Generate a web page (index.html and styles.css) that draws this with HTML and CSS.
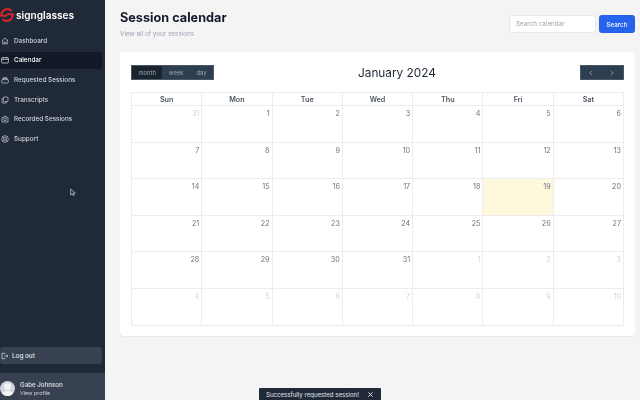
FILE: index.html
```html
<!DOCTYPE html>
<html lang="en">
<head>
    <meta charset="UTF-8">
    <title>Session calendar</title>
    <link rel="stylesheet" href="styles.css">
</head>
<body>
    <div class="app">
        <aside class="sidebar">
            <div class="brand">
                <svg class="brand-mark" viewBox="0 0 14 14" width="14" height="14" fill="none" stroke="#dc2626" stroke-width="2">
                    <path d="M11.6 3A6 6 0 0 0 1.8 4.6L1 8"/>
                    <path d="M2.4 11A6 6 0 0 0 12.2 9.4L13 6"/>
                    <path d="M0.5 7.8H7.2M6.8 6.2H13.5"/>
                </svg>
                <span>signglasses</span>
            </div>
            <nav class="nav">
                <a class="nav-item">
                    <svg class="icon" viewBox="0 0 24 24"><path d="M3 11 12 3l9 8M5 9.5V21h5v-6h4v6h5V9.5"/></svg>
                    Dashboard
                </a>
                <a class="nav-item active">
                    <svg class="icon" viewBox="0 0 24 24"><rect x="2" y="5" width="20" height="16" rx="2"/><path d="M2 10h20M7 3v4M17 3v4"/></svg>
                    Calendar
                </a>
                <a class="nav-item">
                    <svg class="icon" viewBox="0 0 24 24"><rect x="2" y="11" width="20" height="10" rx="2"/><path d="M5 11V8h14v3M7 8V5h10v3"/></svg>
                    Requested Sessions
                </a>
                <a class="nav-item">
                    <svg class="icon" viewBox="0 0 24 24"><rect x="7" y="3" width="14" height="14" rx="3"/><path d="M7 7H5a2 2 0 0 0-2 2v10a2 2 0 0 0 2 2h10a2 2 0 0 0 2-2v-2"/></svg>
                    Transcripts
                </a>
                <a class="nav-item">
                    <svg class="icon" viewBox="0 0 24 24"><path d="M3 7h4l2-3h6l2 3h4v14H3z"/><circle cx="12" cy="13" r="4"/></svg>
                    Recorded Sessions
                </a>
                <a class="nav-item">
                    <svg class="icon" viewBox="0 0 24 24"><circle cx="12" cy="12" r="10"/><circle cx="12" cy="12" r="4"/><path d="m5 5 4 4M19 5l-4 4M5 19l4-4M19 19l-4-4"/></svg>
                    Support
                </a>
            </nav>
            <a class="logout">
                <svg class="icon" viewBox="0 0 24 24"><path d="M13 4H3v16h10M10 12h11M17 8l4 4-4 4"/></svg>
                Log out
            </a>
            <div class="profile">
                <div class="avatar"><div class="avatar-head"></div><div class="avatar-body"></div></div>
                <div class="profile-text">
                    <div class="profile-name">Gabe Johnson</div>
                    <div class="profile-link">View profile</div>
                </div>
            </div>
        </aside>

        <main class="main">
            <div class="page-header">
                <div>
                    <h1>Session calendar</h1>
                    <p>View all of your sessions</p>
                </div>
                <div class="search">
                    <input type="text" placeholder="Search calendar">
                    <button class="search-button">Search</button>
                </div>
            </div>

            <section class="card">
                <div class="toolbar">
                    <div class="btn-group">
                        <button class="btn current">month</button>
                        <button class="btn">week</button>
                        <button class="btn">day</button>
                    </div>
                    <h2>January 2024</h2>
                    <div class="btn-group arrows">
                        <button class="btn">
                            <svg class="chevron" viewBox="0 0 10 10"><path d="M6.5 2 3.5 5l3 3"/></svg>
                        </button>
                        <button class="btn">
                            <svg class="chevron" viewBox="0 0 10 10"><path d="M3.5 2l3 3-3 3"/></svg>
                        </button>
                    </div>
                </div>

                <div class="calendar">
                    <div class="day-name">Sun</div>
                    <div class="day-name">Mon</div>
                    <div class="day-name">Tue</div>
                    <div class="day-name">Wed</div>
                    <div class="day-name">Thu</div>
                    <div class="day-name">Fri</div>
                    <div class="day-name">Sat</div>

                    <div class="day other">31</div>
                    <div class="day">1</div>
                    <div class="day">2</div>
                    <div class="day">3</div>
                    <div class="day">4</div>
                    <div class="day">5</div>
                    <div class="day">6</div>

                    <div class="day">7</div>
                    <div class="day">8</div>
                    <div class="day">9</div>
                    <div class="day">10</div>
                    <div class="day">11</div>
                    <div class="day">12</div>
                    <div class="day">13</div>

                    <div class="day">14</div>
                    <div class="day">15</div>
                    <div class="day">16</div>
                    <div class="day">17</div>
                    <div class="day">18</div>
                    <div class="day today">19</div>
                    <div class="day">20</div>

                    <div class="day">21</div>
                    <div class="day">22</div>
                    <div class="day">23</div>
                    <div class="day">24</div>
                    <div class="day">25</div>
                    <div class="day">26</div>
                    <div class="day">27</div>

                    <div class="day">28</div>
                    <div class="day">29</div>
                    <div class="day">30</div>
                    <div class="day">31</div>
                    <div class="day other">1</div>
                    <div class="day other">2</div>
                    <div class="day other">3</div>

                    <div class="day other">4</div>
                    <div class="day other">5</div>
                    <div class="day other">6</div>
                    <div class="day other">7</div>
                    <div class="day other">8</div>
                    <div class="day other">9</div>
                    <div class="day other">10</div>
                </div>
            </section>
        </main>
    </div>

    <svg class="cursor" viewBox="0 0 10 12" width="7" height="9"><path d="M1 1v8.5l2.2-2 1.4 3 1.4-.7-1.4-2.9h3z" fill="#1f2937" stroke="#fff" stroke-width=".8"/></svg>

    <div class="toast">
        <span>Successfully requested session!</span>
        <svg class="toast-close" viewBox="0 0 10 10"><path d="M2 2l6 6M8 2l-6 6"/></svg>
    </div>
</body>
</html>
```

FILE: styles.css
```css
html, body {
    margin: 0;
    height: 100%;
    overflow: hidden;
}
body {
    font-family: Inter, "Noto Sans", sans-serif;
    background: #f4f4f5;
    color: #111827;
}
.app {
    display: flex;
    height: 400px;
}
/* own layers, keeps the small text greyscale instead of coloured at the edges */
.main,
.brand,
.nav,
.logout,
.profile-text,
.toast {
    will-change: opacity;
}

/* sidebar */
.sidebar {
    width: 105px;
    flex: none;
    display: flex;
    flex-direction: column;
    background: #1f2937;
    color: #d1d5db;
}
.brand {
    display: flex;
    align-items: center;
    gap: 2px;
    height: 30px;
    font-size: 10.1px;
    font-weight: 600;
    color: #fff;
}
.nav {
    flex: 1;
    display: flex;
    flex-direction: column;
    gap: 2px;
    padding-top: 2px;
    padding-right: 3px;
}
.nav-item {
    display: flex;
    align-items: center;
    gap: 5px;
    height: 17.6px;
    padding-left: 1px;
    font-size: 6.35px;
    font-weight: 500;
    border-radius: 3px;
}
.nav-item.active {
    background: #111827;
    color: #fff;
}
.icon {
    width: 8px;
    height: 8px;
    flex: none;
    fill: none;
    stroke: currentColor;
    stroke-width: 2;
}
.logout {
    display: flex;
    align-items: center;
    gap: 3px;
    height: 17px;
    margin: 0 3px 9px 0;
    padding-left: 1px;
    background: #374151;
    border-radius: 3px;
    font-size: 6.35px;
    font-weight: 500;
    color: #e5e7eb;
}
.profile {
    display: flex;
    align-items: center;
    gap: 5px;
    box-sizing: border-box;
    height: 27px;
    padding-top: 3px;
    background: #374151;
}
.avatar {
    width: 15px;
    height: 15px;
    flex: none;
    border-radius: 50%;
    background: #d1d5db;
    overflow: hidden;
}
.avatar-head {
    width: 7px;
    height: 7px;
    margin: 2px auto 1px;
    border-radius: 50%;
    background: #f3f4f6;
}
.avatar-body {
    width: 13px;
    height: 8px;
    margin: 0 auto;
    border-radius: 50%;
    background: #f3f4f6;
}
.profile-name {
    font-size: 6.2px;
    font-weight: 500;
    color: #e5e7eb;
    line-height: 9px;
}
.profile-link {
    font-size: 5.4px;
    color: #d1d5db;
    line-height: 8px;
}

/* main */
.main {
    flex: 1;
    min-width: 0;
    padding: 0 5px 0 15px;
}
.page-header {
    display: flex;
    justify-content: space-between;
    height: 52px;
}
.page-header h1 {
    margin: 9px 0 0;
    font-size: 12.7px;
    line-height: 18px;
    font-weight: 700;
}
.page-header p {
    margin: 3px 0 0;
    font-size: 6.35px;
    line-height: 9px;
    color: #9ca3af;
}
.search {
    display: flex;
    gap: 3px;
    margin-top: 15px;
    height: 18px;
}
.search input {
    box-sizing: border-box;
    width: 87px;
    padding: 0 6px;
    border: 1px solid #e5e7eb;
    border-radius: 3px;
    background: #fff;
    font-family: inherit;
    font-size: 6.3px;
    outline: none;
}
.search input::placeholder {
    color: #9ca3af;
}
.search-button {
    width: 36px;
    padding: 0;
    border: 0;
    border-radius: 3px;
    background: #2563eb;
    color: #fff;
    font-family: inherit;
    font-size: 6.2px;
    font-weight: 500;
}

/* card */
.card {
    box-sizing: border-box;
    height: 284px;
    padding: 13px 11px 11px;
    background: #fff;
    border-radius: 4px;
    box-shadow: 0 1px 1px rgba(0, 0, 0, 0.06);
}
.toolbar {
    display: flex;
    align-items: center;
    justify-content: space-between;
    height: 15px;
    margin-bottom: 12px;
}
.toolbar h2 {
    margin: 0;
    font-size: 11.8px;
    font-weight: 400;
    color: #1f2937;
}
.btn-group {
    display: flex;
    box-sizing: border-box;
    height: 15px;
    border: 1px solid #4b5563;
    background: #2c3e50;
}
.btn-group.arrows {
    width: 44px;
}
.btn {
    display: flex;
    align-items: center;
    justify-content: center;
    padding: 0 6.5px;
    border: 0;
    background: transparent;
    color: #9ca3af;
    font-family: inherit;
    font-size: 5.8px;
}
.arrows .btn {
    flex: 1;
    padding: 0;
}
.btn.current {
    background: #1a252f;
}
.chevron {
    width: 8px;
    height: 8px;
    fill: none;
    stroke: #9ca3af;
    stroke-width: 1;
}

/* calendar */
.calendar {
    display: grid;
    grid-template-columns: repeat(7, 1fr);
    grid-template-rows: 13px repeat(6, 36.6px);
    border-top: 1px solid #ebedf0;
    border-left: 1px solid #ebedf0;
}
.day-name,
.day {
    border-right: 1px solid #ebedf0;
    border-bottom: 1px solid #ebedf0;
}
.day-name {
    display: flex;
    align-items: center;
    justify-content: center;
    font-size: 7.2px;
    font-weight: 600;
    color: #4b5563;
}
.day {
    padding: 3px 2px 0 0;
    text-align: right;
    font-size: 7.2px;
    line-height: 9px;
    color: #6b7280;
}
.day.other {
    color: #d1d5db;
}
.day.today {
    background: #fef9dc;
}

/* things on top */
.cursor {
    position: absolute;
    left: 70px;
    top: 188px;
}
.toast {
    position: absolute;
    left: 259px;
    top: 388px;
    box-sizing: border-box;
    width: 122px;
    height: 12px;
    display: flex;
    justify-content: space-between;
    padding: 2px 7px 0;
    background: #1f2937;
    border-radius: 1px 1px 0 0;
    color: #e5e7eb;
    font-size: 6.1px;
    line-height: 9px;
    white-space: nowrap;
}
.toast-close {
    width: 7px;
    height: 7px;
    margin-top: 1px;
    fill: none;
    stroke: #e5e7eb;
    stroke-width: 1.4;
}
```
